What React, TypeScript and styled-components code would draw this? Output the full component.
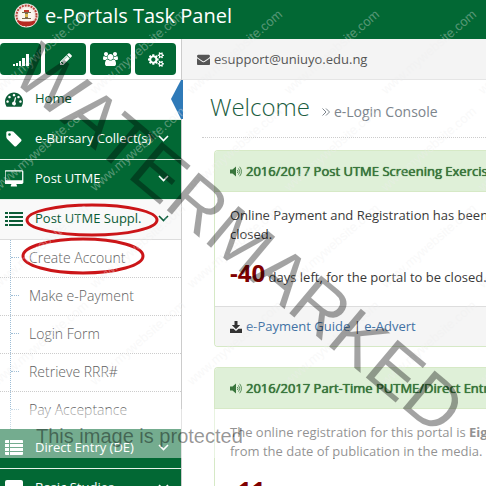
import React from "react";
import styled, { createGlobalStyle } from "styled-components";

const GREEN = "#026834";

const GlobalStyle = createGlobalStyle`
  * { box-sizing: border-box; }
  body {
    margin: 0;
    background: #fff;
    color: #393939;
    font-family: "Open Sans", "Noto Sans", sans-serif;
    font-size: 13px;
    line-height: 19px;
  }
  svg { flex: none; }
`;

const Page = styled.div`
  position: relative;
  display: flex;
  flex-direction: column;
  height: 100vh;
  overflow: hidden;
`;

const Header = styled.header`
  display: flex;
  flex: none;
  align-items: center;
  gap: 6px;
  height: 39px;
  padding: 0 14px 8px;
  background: ${GREEN};
  color: #fff;
`;

const Brand = styled.h1`
  margin: 0;
  font-size: 20px;
  font-weight: 400;
  line-height: 30px;
  white-space: nowrap;
`;

const Columns = styled.div`
  display: flex;
  flex: 1;
  min-height: 0;
`;

const Sidebar = styled.aside`
  flex: none;
  width: 182px;
  border-right: 1px solid #ccc;
`;

const Shortcuts = styled.div`
  display: grid;
  grid-template-columns: repeat(4, 41px);
  gap: 4px;
  height: 41px;
  padding: 4px 0;
  border-bottom: 1px solid #ddd;
`;

const Shortcut = styled.button`
  display: flex;
  align-items: center;
  justify-content: center;
  height: 32px;
  padding: 0;
  border: 0;
  border-radius: 4px;
  background: ${GREEN};
  color: #fff;
  cursor: pointer;
`;

const List = styled.ul`
  margin: 0;
  padding: 0;
  list-style: none;
`;

const NavItem = styled.li<{ $light?: boolean }>`
  position: relative;
  border-bottom: 1px solid ${(p) => (p.$light ? "#ddd" : "#e6f2ea")};
`;

const NavLink = styled.a<{ $tone: "green" | "white" | "open" }>`
  display: flex;
  align-items: center;
  gap: 11px;
  height: 39px;
  padding: 0 12px 2px 4px;
  background: ${(p) => ({ green: GREEN, white: "#fff", open: "#f9f9f9" })[p.$tone]};
  color: ${(p) => (p.$tone === "green" ? "#fff" : "#0b5c36")};
  text-decoration: none;
  white-space: nowrap;
`;

const NavIcon = styled.span`
  display: flex;
  flex: none;
  justify-content: center;
  width: 20px;
`;

const NavLabel = styled.span`
  flex: 1;
  min-width: 0;
`;

const Pointer = styled.svg`
  position: absolute;
  top: 0;
  right: -2px;
`;

const Submenu = styled(List)`
  position: relative;
  &::before {
    content: "";
    position: absolute;
    top: 0;
    bottom: 0;
    left: 10px;
    border-left: 1px dotted #9dbdd6;
  }
`;

const SubItem = styled.li`
  position: relative;
  &:not(:first-child) {
    border-top: 1px dotted #ccc;
  }
  &::before {
    content: "";
    position: absolute;
    top: 17px;
    left: 11px;
    width: 8px;
    border-top: 1px dotted #9dbdd6;
  }
`;

const SubLink = styled.a`
  display: block;
  height: 37px;
  padding: 8px 0 10px 29px;
  color: #616161;
  font-size: 14px;
  font-weight: 300;
  text-decoration: none;
`;

const Ring = styled.svg<{ $left: number; $top: number }>`
  position: absolute;
  z-index: 1;
  left: ${(p) => p.$left}px;
  top: ${(p) => p.$top}px;
  fill: none;
  stroke: #cb1518;
  stroke-width: 3;
  pointer-events: none;
`;

const Main = styled.main`
  flex: 1;
  min-width: 0;
  overflow: hidden;
`;

const Crumbs = styled.div`
  display: flex;
  align-items: center;
  gap: 4px;
  height: 41px;
  padding: 0 15px;
  border-bottom: 1px solid #e5e5e5;
  background: #f4f4f4;
  color: #555;
`;

const PageTitle = styled.h2`
  display: flex;
  align-items: baseline;
  gap: 12px;
  height: 58px;
  margin: 0 0 12px 20px;
  padding: 11px 8px 0;
  border-bottom: 1px dotted #ccc;
  color: #1a5c40;
  font-size: 24px;
  font-weight: 300;
  line-height: 32px;
  white-space: nowrap;
`;

const Subtitle = styled.small`
  display: flex;
  align-items: center;
  gap: 4px;
  color: #7d858d;
  font-size: 14px;
  font-weight: 400;
`;

const Panel = styled.section`
  margin: 0 0 20px 32px;
  border: 1px solid #d6e9c6;
  border-right: 0;
  border-radius: 4px 0 0 4px;
  white-space: nowrap;
  overflow: hidden;
`;

const PanelTitle = styled.h3`
  display: flex;
  align-items: center;
  gap: 4px;
  height: 41px;
  margin: 0;
  padding: 0 15px;
  border-bottom: 1px solid #d6e9c6;
  background: #dff0d8;
  color: #3a763d;
  font-size: 13px;
  font-weight: 400;
  text-shadow: 0 0 0 currentColor, 0 0 1px currentColor;
`;

const PanelBody = styled.div`
  height: 114px;
  padding: 14px 15px;
`;

const Text = styled.p`
  margin: 0;
`;

const Countdown = styled.p`
  margin: 12px 0 0;
  line-height: 34px;
`;

const Days = styled.strong`
  color: #800000;
  font-size: 24px;
  font-weight: 700;
`;

const PanelFooter = styled.footer`
  display: flex;
  align-items: center;
  gap: 4px;
  height: 40px;
  padding: 0 15px;
  border-top: 1px solid #ddd;
  background: #f5f5f5;
`;

const Link = styled.a`
  color: #4272a4;
  text-decoration: none;
`;

const Overlay = styled.div`
  position: absolute;
  z-index: 2;
  inset: 0;
  overflow: hidden;
  pointer-events: none;
`;

const Stamps = styled.div`
  position: absolute;
  top: 0;
  left: 0;
  display: grid;
  grid-template-columns: repeat(7, 97px);
  grid-auto-rows: 97px;
  margin-left: -97px;
`;

const Stamp = styled.span`
  align-self: end;
  width: 0;
  transform: rotate(-41deg);
  transform-origin: 0 100%;
  color: rgba(238, 238, 238, 0.36);
  font: 13px/14px "Liberation Sans", Arial, sans-serif;
  white-space: nowrap;
`;

const Diagonal = styled.div`
  position: absolute;
  top: 20px;
  left: 9px;
  transform: rotate(40deg);
  transform-origin: 0 58px;
  color: rgba(0, 0, 0, 0.36);
  font: 72px/66px "Liberation Sans", Arial, sans-serif;
  white-space: nowrap;
`;

const Notice = styled.div`
  position: absolute;
  top: 409px;
  left: 0;
  right: 0;
  height: 49px;
  padding: 15px 36px;
  background: rgba(255, 255, 255, 0.45);
  color: rgba(0, 0, 0, 0.42);
  font: 20px/24px "Liberation Sans", Arial, sans-serif;
`;

type GlyphProps = { d: string; size: number; wide?: boolean };
const Glyph = ({ d, size, wide }: GlyphProps) => (
  <svg
    width={wide ? Math.round(size * 1.07) : size}
    height={size}
    viewBox={wide ? "0 0 1920 1792" : "0 0 1792 1792"}
    fill="currentColor"
    aria-hidden="true"
  >
    <path d={d} />
  </svg>
);

const SMALL_COG =
  "v140q0 16-149 31-12 27-30 52 51 113 51 138 0 4-4 7-122 71-124 71-8 0-46-47t-52-68q-20 2-30 2t-30-2q-14 21-52 68t-46 47q-2 0-124-71-4-3-4-7 0-25 51-138-18-25-30-52-149-15-149-31v-140q0-16 149-31 13-29 30-52-51-113-51-138 0-4 4-7 4-2 35-20t59-34 30-16q8 0 46 46.5t52 67.5q20-2 30-2t30 2q51-71 92-112l6-2q4 0 124 70 4 3 4 7 0 25-51 138 17 23 30 52 149 15 149 31z";

const icons = {
  pencil:
    "M491 1536l91-91-235-235-91 91v107h128v128h107zm523-928q0-22-22-22-10 0-17 7l-542 542q-7 7-7 17 0 22 22 22 10 0 17-7l542-542q7-7 7-17zm-54-192l416 416-832 832h-416v-416zm683 96q0 53-37 90l-166 166-416-416 166-165q36-38 90-38 53 0 91 38l235 234q37 39 37 91z",
  users:
    "M593 896q-162 5-265 128h-134q-82 0-138-40.5t-56-118.5q0-353 124-353 6 0 43.5 21t97.5 42.5 119 21.5q67 0 133-23-5 37-5 66 0 139 81 256zm1071 637q0 120-73 189.5t-194 69.5h-874q-121 0-194-69.5t-73-189.5q0-53 3.5-103.5t14-109 26.5-108.5 43-97.5 62-81 85.5-53.5 111.5-20q10 0 43 21.5t73 48 107 48 135 21.5 135-21.5 107-48 73-48 43-21.5q61 0 111.5 20t85.5 53.5 62 81 43 97.5 26.5 108.5 14 109 3.5 103.5zm-1024-1277q0 106-75 181t-181 75-181-75-75-181 75-181 181-75 181 75 75 181zm704 384q0 159-112.5 271.5t-271.5 112.5-271.5-112.5-112.5-271.5 112.5-271.5 271.5-112.5 271.5 112.5 112.5 271.5zm576 225q0 78-56 118.5t-138 40.5h-134q-103-123-265-128 81-117 81-256 0-29-5-66 66 23 133 23 59 0 119-21.5t97.5-42.5 43.5-21q124 0 124 353zm-128-609q0 106-75 181t-181 75-181-75-75-181 75-181 181-75 181 75 75 181z",
  cogs:
    "M896 896q0-106-75-181t-181-75-181 75-75 181 75 181 181 75 181-75 75-181zm768 512q0-52-38-90t-90-38-90 38-38 90q0 53 37.5 90.5t90.5 37.5 90.5-37.5 37.5-90.5zm0-1024q0-52-38-90t-90-38-90 38-38 90q0 53 37.5 90.5t90.5 37.5 90.5-37.5 37.5-90.5zm-384 421v185q0 10-7 19.5t-16 10.5l-155 24q-11 35-32 76 34 48 90 115 7 11 7 20 0 12-7 19-23 30-82.5 89.5t-78.5 59.5q-11 0-21-7l-115-90q-37 19-77 31-11 108-23 155-7 24-30 24h-186q-11 0-20-7.5t-10-17.5l-23-153q-34-10-75-31l-118 89q-7 7-20 7-11 0-21-8-144-133-144-160 0-9 7-19 10-14 41-53t47-61q-23-44-35-82l-152-24q-10-1-17-9.5t-7-19.5v-185q0-10 7-19.5t16-10.5l155-24q11-35 32-76-34-48-90-115-7-11-7-20 0-12 7-20 22-30 82-89t79-59q11 0 21 7l115 90q34-18 77-32 11-108 23-154 7-24 30-24h186q11 0 20 7.5t10 17.5l23 153q34 10 75 31l118-89q8-7 20-7 11 0 21 8 144 133 144 160 0 8-7 19-12 16-42 54t-45 60q23 48 34 82l152 23q10 2 17 10.5t7 19.5zm640 533" +
    SMALL_COG +
    "m0-1024" +
    SMALL_COG,
  dashboard:
    "M384 1152q0-53-37.5-90.5t-90.5-37.5-90.5 37.5-37.5 90.5 37.5 90.5 90.5 37.5 90.5-37.5 37.5-90.5zm192-448q0-53-37.5-90.5t-90.5-37.5-90.5 37.5-37.5 90.5 37.5 90.5 90.5 37.5 90.5-37.5 37.5-90.5zm428 481l101-382q6-26-7.5-48.5t-38.5-29.5-48 6.5-30 39.5l-101 382q-60 5-107 43.5t-63 98.5q-20 77 20 146t117 89 146-20 89-117q16-60-6-117t-72-91zm660-33q0-53-37.5-90.5t-90.5-37.5-90.5 37.5-37.5 90.5 37.5 90.5 90.5 37.5 90.5-37.5 37.5-90.5zm-640-640q0-53-37.5-90.5t-90.5-37.5-90.5 37.5-37.5 90.5 37.5 90.5 90.5 37.5 90.5-37.5 37.5-90.5zm448 192q0-53-37.5-90.5t-90.5-37.5-90.5 37.5-37.5 90.5 37.5 90.5 90.5 37.5 90.5-37.5 37.5-90.5zm320 448q0 261-141 483-19 29-54 29h-1402q-35 0-54-29-141-221-141-483 0-182 71-348t191-286 286-191 348-71 348 71 286 191 191 286 71 348z",
  tag:
    "M576 448q0-53-37.5-90.5t-90.5-37.5-90.5 37.5-37.5 90.5 37.5 90.5 90.5 37.5 90.5-37.5 37.5-90.5zm1067 576q0 53-37 90l-491 492q-39 37-91 37-53 0-90-37l-715-716q-38-37-64.5-101t-26.5-117v-416q0-52 38-90t90-38h416q53 0 117 26.5t102 64.5l715 714q37 39 37 91z",
  desktop:
    "M1728 992v-832q0-13-9.5-22.5t-22.5-9.5h-1600q-13 0-22.5 9.5t-9.5 22.5v832q0 13 9.5 22.5t22.5 9.5h1600q13 0 22.5-9.5t9.5-22.5zm128-832v1088q0 66-47 113t-113 47h-544q0 37 16 77.5t32 71 16 43.5q0 26-19 45t-45 19h-512q-26 0-45-19t-19-45q0-14 16-44t32-70 16-78h-544q-66 0-113-47t-47-113v-1088q0-66 47-113t113-47h1600q66 0 113 47t47 113z",
  envelope:
    "M1792 710v794q0 66-47 113t-113 47h-1472q-66 0-113-47t-47-113v-794q44 49 101 87 362 246 497 345 57 42 92.5 65.5t94.5 48 110 24.5h2q51 0 110-24.5t94.5-48 92.5-65.5q170-123 498-345 57-39 100-87zm0-294q0 79-49 151t-122 123q-376 261-468 325-10 7-42.5 31t-54 38.5-52 32.5-57.5 27-50 9h-2q-23 0-50-9t-57.5-27-52-32.5-54-38.5-42.5-31q-91-64-262-182.5t-205-142.5q-62-42-117-115.5t-55-136.5q0-78 41.5-130t118.5-52h1472q65 0 112.5 47t47.5 113z",
};

const Crest = () => (
  <svg width="25" height="25" viewBox="0 0 25 25" aria-hidden="true">
    <circle cx="12.5" cy="12.5" r="12" fill="#f3e9e2" />
    <circle cx="12.5" cy="12.5" r="10" fill="none" stroke="#b8463c" strokeWidth="2" strokeDasharray="2 1" />
    <circle cx="12.5" cy="12.5" r="7.5" fill="#fbf6ef" />
    <path d="M3 17c5 2 14 2 19 0l-2 4c-4 3-11 3-15 0z" fill="#b52a22" />
    <path d="M8 9h9v1h-3v5h3v1H8v-1h3v-5H8z" fill="#7d6a4c" />
    <path d="M10 7h5v2h-5z" fill="#c23a2c" />
    <path d="M11 11h3v3h-3z" fill="#d9b64a" />
  </svg>
);

const Bars = () => (
  <svg width="16" height="14" viewBox="0 0 16 14" fill="currentColor" aria-hidden="true">
    <path d="M0 12h2v2H0zM3 11h2v3H3zM6 9h2v5H6zM9 6h3v8H9zM13 2h3v12h-3z" />
  </svg>
);

const ListIcon = () => (
  <svg width="18" height="14" viewBox="0 0 18 14" fill="currentColor" aria-hidden="true">
    <path d="M0 0h3v2H0zM4 0h14v2H4zM0 4h3v2H0zM4 4h14v2H4zM0 8h3v2H0zM4 8h14v2H4zM0 12h3v2H0zM4 12h14v2H4z" />
  </svg>
);

const RowsIcon = () => (
  <svg width="18" height="15" viewBox="0 0 18 15" fill="currentColor" aria-hidden="true">
    <path d="M0 1a1 1 0 0 1 1-1h3v3H0zM5 0h12a1 1 0 0 1 1 1v2H5zM0 4h4v3H0zM5 4h13v3H5zM0 8h4v3H0zM5 8h13v3H5zM0 12h4v3H1a1 1 0 0 1-1-1zM5 12h13v2a1 1 0 0 1-1 1H5z" />
  </svg>
);

const CardIcon = () => (
  <svg width="18" height="15" viewBox="0 0 18 15" fill="currentColor" aria-hidden="true">
    <path d="M2 0h14a2 2 0 0 1 2 2v13H0V2a2 2 0 0 1 2-2z" />
  </svg>
);

const Caret = () => (
  <svg width="11" height="7" viewBox="0 0 11 7" fill="none" stroke="currentColor" strokeWidth="1.6" aria-hidden="true">
    <path d="M1 1l4.500 4.500L10 1" />
  </svg>
);

const Chevrons = () => (
  <svg width="8" height="8" viewBox="0 0 8 8" fill="none" stroke="currentColor" aria-hidden="true">
    <path d="M0.500 0.500L4 4L0.500 7.500M4 0.500L7.500 4L4 7.500" />
  </svg>
);

const Speaker = () => (
  <svg width="12" height="11" viewBox="0 0 12 11" fill="currentColor" aria-hidden="true">
    <path d="M0 3.500h2.500L6 0.500v10L2.500 7.500H0z" />
    <path
      d="M7.300 4q1.400 1.500 0 3M8.500 2.400q2.600 3.100 0 6.200M9.700 0.800q3.600 4.700 0 9.400"
      fill="none"
      stroke="currentColor"
      strokeWidth="0.8"
    />
  </svg>
);

const Download = () => (
  <svg width="12" height="12" viewBox="0 0 12 12" fill="#333" aria-hidden="true">
    <path d="M4.500 0h3v4h2.700L6 8.300 1.800 4h2.700z" />
    <path d="M0 7.800h3.500L6 10l2.500-2.200H12V12H0z" />
  </svg>
);

const menuTop = [
  { label: "e-Bursary Collect(s)", icon: <Glyph d={icons.tag} size={18} /> },
  { label: "Post UTME", icon: <Glyph d={icons.desktop} size={18} wide /> },
];
const submenu = ["Create Account", "Make e-Payment", "Login Form", "Retrieve RRR#", "Pay Acceptance"];
const menuBottom = [
  { label: "Direct Entry (DE)", icon: <RowsIcon /> },
  { label: "Basic Studies", icon: <CardIcon /> },
];

const MenuEntry = ({ label, icon }: { label: string; icon: React.ReactNode }) => (
  <NavItem>
    <NavLink href="#" $tone="green">
      <NavIcon>{icon}</NavIcon>
      <NavLabel>{label}</NavLabel>
      <Caret />
    </NavLink>
  </NavItem>
);

export default function App() {
  return (
    <Page>
      <GlobalStyle />
      <Header>
        <Crest />
        <Brand>e-Portals Task Panel</Brand>
      </Header>
      <Columns>
        <Sidebar>
          <Shortcuts>
            <Shortcut aria-label="Statistics"><Bars /></Shortcut>
            <Shortcut aria-label="Edit"><Glyph d={icons.pencil} size={14} /></Shortcut>
            <Shortcut aria-label="Users"><Glyph d={icons.users} size={14} wide /></Shortcut>
            <Shortcut aria-label="Settings"><Glyph d={icons.cogs} size={15} wide /></Shortcut>
          </Shortcuts>
          <nav>
            <List>
              <NavItem>
                <NavLink href="#" $tone="white">
                  <NavIcon><Glyph d={icons.dashboard} size={18} /></NavIcon>
                  <NavLabel>Home</NavLabel>
                </NavLink>
                <Pointer width="12" height="39" viewBox="0 0 12 39" fill="#2f7ab8" aria-hidden="true">
                  <path d="M10 0h2v39h-2L0 19z" />
                </Pointer>
              </NavItem>
              {menuTop.map((m) => <MenuEntry key={m.label} {...m} />)}
              <NavItem $light>
                <NavLink href="#" $tone="open">
                  <NavIcon><ListIcon /></NavIcon>
                  <NavLabel>Post UTME Suppl.</NavLabel>
                  <Caret />
                </NavLink>
                <Ring $left={25} $top={3} width="134" height="34" aria-hidden="true">
                  <ellipse cx="67" cy="17" rx="65" ry="15" />
                </Ring>
              </NavItem>
              <li>
                <Submenu>
                  {submenu.map((label, i) => (
                    <SubItem key={label}>
                      <SubLink href="#">{label}</SubLink>
                      {i === 0 && (
                        <Ring $left={21} $top={-3} width="126" height="38" aria-hidden="true">
                          <ellipse cx="62" cy="19" rx="60" ry="17" />
                        </Ring>
                      )}
                    </SubItem>
                  ))}
                </Submenu>
              </li>
              {menuBottom.map((m) => <MenuEntry key={m.label} {...m} />)}
            </List>
          </nav>
        </Sidebar>
        <Main>
          <Crumbs>
            <Glyph d={icons.envelope} size={13} />
            <span>esupport@uniuyo.edu.ng</span>
          </Crumbs>
          <PageTitle>
            Welcome
            <Subtitle><Chevrons /> e-Login Console</Subtitle>
          </PageTitle>
          <Panel>
            <PanelTitle><Speaker />2016/2017 Post UTME Screening Exercise</PanelTitle>
            <PanelBody>
              <Text>Online Payment and Registration has been<br />closed.</Text>
              <Countdown><Days>-40</Days> days left, for the portal to be closed.</Countdown>
            </PanelBody>
            <PanelFooter>
              <Download />
              <span><Link href="#">e-Payment Guide</Link> | <Link href="#">e-Advert</Link></span>
            </PanelFooter>
          </Panel>
          <Panel>
            <PanelTitle><Speaker />2016/2017 Part-Time PUTME/Direct Entry</PanelTitle>
            <PanelBody>
              <Text>The online registration for this portal is <b>Eight</b><br />from the date of publication in the media.</Text>
              <Countdown><Days>-11</Days> days left</Countdown>
            </PanelBody>
          </Panel>
        </Main>
      </Columns>
      <Overlay aria-hidden="true">
        <Stamps>
          {Array.from({ length: 28 }, (_, i) => <Stamp key={i}>www.mywebsite.com</Stamp>)}
        </Stamps>
        <Notice>This image is protected</Notice>
        <Diagonal>WATERMARKED</Diagonal>
      </Overlay>
    </Page>
  );
}
